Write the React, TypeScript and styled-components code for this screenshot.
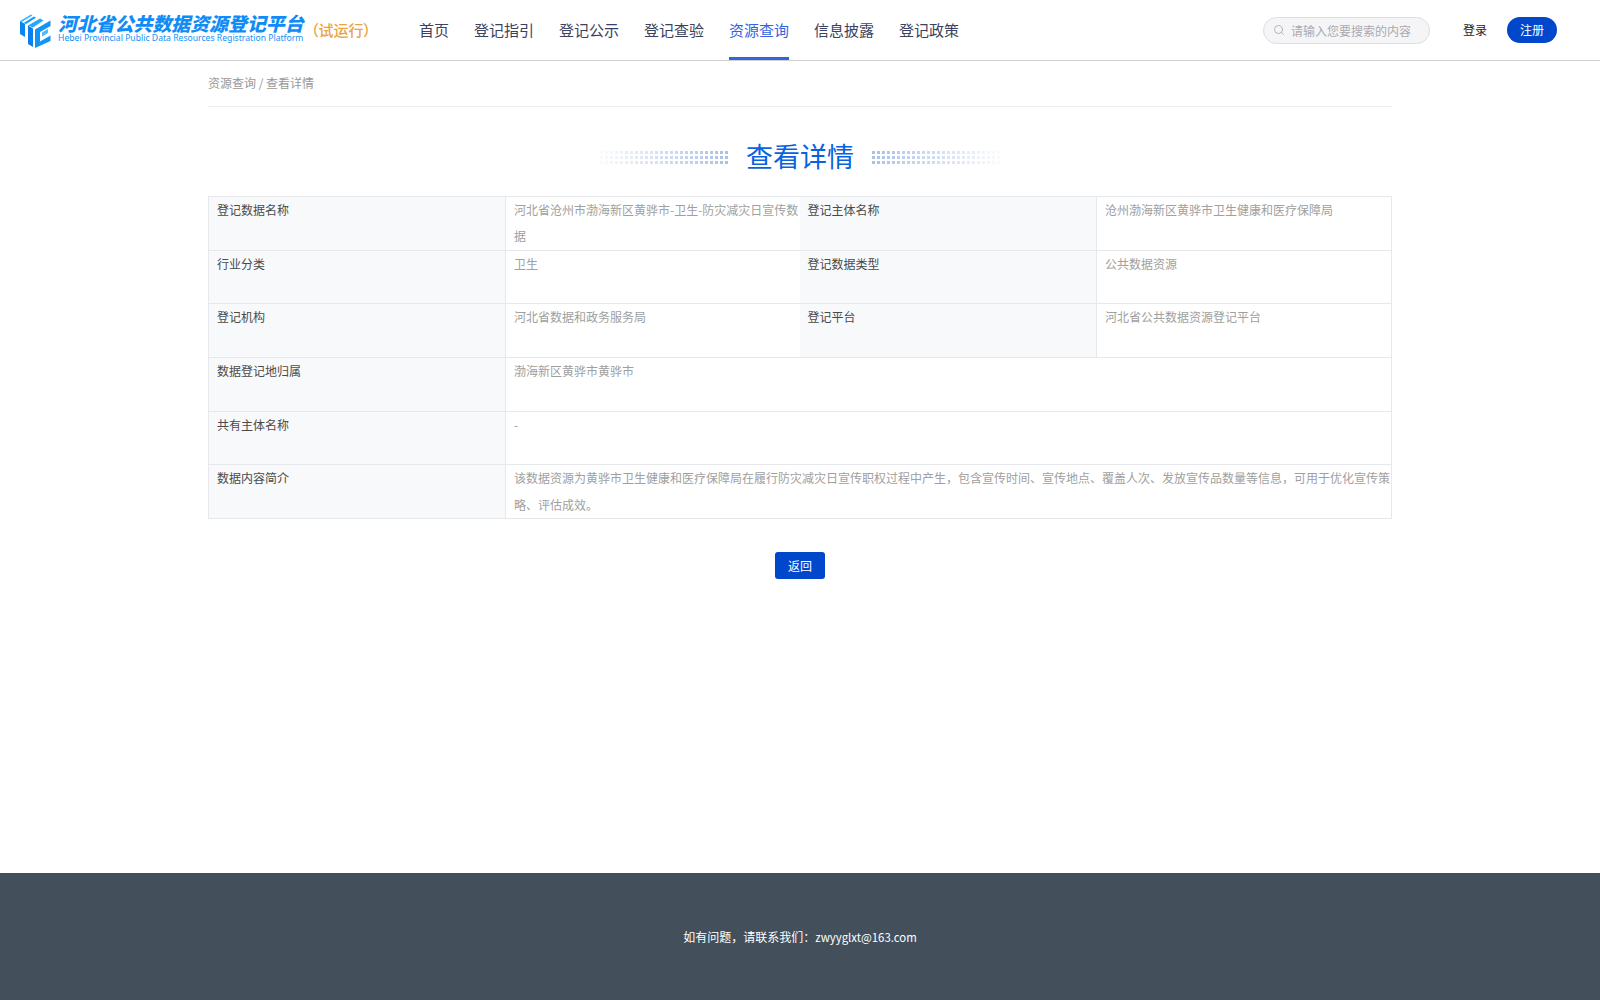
import React from "react";
import styled, { createGlobalStyle } from "styled-components";
import { Search } from "lucide-react";

const NAV_ITEMS = ["首页", "登记指引", "登记公示", "登记查验", "资源查询", "信息披露", "登记政策"];

const FONT = `"Noto Sans CJK SC", "Noto Sans", sans-serif`;

const GlobalStyle = createGlobalStyle`
  html, body {
    margin: 0;
    padding: 0;
    background: #fff;
    font-family: ${FONT};
  }
  * {
    box-sizing: border-box;
  }
`;

const Logo = () => (
  <LogoWrap>
    <svg width="31" height="36" viewBox="0 0 31 36" fill="none">
      <path d="M0 9 5 12v13l-5-3z" fill="#0a86f2" />
      <path d="M0 9 11 2.500l1.500 1L1.500 10z" fill="#3db2ff" />
      <path d="M3.500 11 14 4.500l2 1.200L6 12z" fill="#1a9bff" />
      <path d="M8 13.500 13 16.500V35l-5-3z" fill="#0a7fee" />
      <path d="M8 13.500 20 6.500l3.500 2L13 15.500z" fill="#2aa6ff" />
      <path d="M15 17.500 30.500 8.500v5.500L20 20v9.500L30.500 23.500V29L15 36z" fill="#1194f7" />
      <path d="M22 20.500 28 17v4l-6 3.500z" fill="#4dbaff" />
    </svg>
    <LogoText>
      <LogoTitle>河北省公共数据资源登记平台</LogoTitle>
      <LogoSub>Hebei Provincial Public Data Resources Registration Platform</LogoSub>
    </LogoText>
    <TrialTag>（试运行）</TrialTag>
  </LogoWrap>
);

const Header = () => (
  <Top>
    <Logo />
    <Nav>
      {NAV_ITEMS.map((item) => (
        <NavItem key={item} $active={item === "资源查询"}>
          {item}
        </NavItem>
      ))}
    </Nav>
    <SearchBox>
      <Search size={12} color="#9a9ca3" strokeWidth={1.4} />
      <span>请输入您要搜索的内容</span>
    </SearchBox>
    <LoginLink>登录</LoginLink>
    <RegisterBtn>注册</RegisterBtn>
  </Top>
);

const App = (): JSX.Element => {
  return (
    <Page>
      <GlobalStyle />
      <Header />
      <Main>
        <Crumb>资源查询 / 查看详情</Crumb>
        <TitleRow>
          <Dots />
          <h1>查看详情</h1>
          <Dots $flip />
        </TitleRow>
        <Info>
          <colgroup>
            <col />
            <col />
            <col />
            <col />
          </colgroup>
          <tbody>
            <tr>
              <Label>登记数据名称</Label>
              <Value>河北省沧州市渤海新区黄骅市-卫生-防灾减灾日宣传数据</Value>
              <Label>登记主体名称</Label>
              <Value>沧州渤海新区黄骅市卫生健康和医疗保障局</Value>
            </tr>
            <tr>
              <Label>行业分类</Label>
              <Value>卫生</Value>
              <Label>登记数据类型</Label>
              <Value>公共数据资源</Value>
            </tr>
            <tr>
              <Label>登记机构</Label>
              <Value>河北省数据和政务服务局</Value>
              <Label>登记平台</Label>
              <Value>河北省公共数据资源登记平台</Value>
            </tr>
            <tr>
              <Label>数据登记地归属</Label>
              <Value colSpan={3}>渤海新区黄骅市黄骅市</Value>
            </tr>
            <tr>
              <Label>共有主体名称</Label>
              <Value colSpan={3}>-</Value>
            </tr>
            <tr>
              <Label>数据内容简介</Label>
              <Value colSpan={3}>
                该数据资源为黄骅市卫生健康和医疗保障局在履行防灾减灾日宣传职权过程中产生，包含宣传时间、宣传地点、覆盖人次、发放宣传品数量等信息，可用于优化宣传策略、评估成效。
              </Value>
            </tr>
          </tbody>
        </Info>
        <BackRow>
          <BackBtn>返回</BackBtn>
        </BackRow>
      </Main>
      <Footer>
        如有问题，请联系我们：<Email>zwyyglxt@163.com</Email>
      </Footer>
    </Page>
  );
};

const Page = styled.div`
  display: flex;
  flex-direction: column;
  min-height: 1000px;
`;

const Top = styled.header`
  display: flex;
  align-items: center;
  height: 61px;
  padding: 0 43px 0 20px;
  border-bottom: 1px solid #cfcfd2;
`;

const LogoWrap = styled.div`
  display: flex;
  align-items: center;
  width: 399px;
  flex-shrink: 0;
  svg {
    flex-shrink: 0;
  }
`;

const LogoText = styled.div`
  margin-left: 7px;
  margin-top: -5px;
  width: 246px;
  flex-shrink: 0;
`;

const LogoTitle = styled.div`
  font-size: 18.900px;
  line-height: 20px;
  font-weight: 900;
  font-style: italic;
  white-space: nowrap;
  color: #0f8cf6;
`;

const LogoSub = styled.div`
  font-family: "Noto Sans", sans-serif;
  font-size: 8.650px;
  line-height: 10px;
  white-space: nowrap;
  color: #1492f7;
`;

const TrialTag = styled.div`
  margin-left: 7px;
  margin-top: -2px;
  font-size: 15px;
  font-weight: 500;
  white-space: nowrap;
  color: #e9a341;
  font-feature-settings: "palt";
`;

const Nav = styled.nav`
  display: flex;
  gap: 25px;
  height: 60px;
`;

const NavItem = styled.a<{ $active?: boolean }>`
  display: block;
  height: 60px;
  line-height: 60px;
  font-size: 15px;
  white-space: nowrap;
  color: ${(p) => (p.$active ? "#3563e0" : "#3a4260")};
  border-bottom: 3px solid ${(p) => (p.$active ? "#3563e0" : "transparent")};
`;

const SearchBox = styled.div`
  display: flex;
  align-items: center;
  gap: 6px;
  margin-left: auto;
  width: 167px;
  height: 27px;
  padding-left: 9px;
  border: 1px solid #dcdde3;
  border-radius: 14px;
  background: #f5f5f7;
  font-size: 12px;
  white-space: nowrap;
  color: #aaaaae;
`;

const LoginLink = styled.a`
  margin-left: 33px;
  margin-top: -1px;
  font-size: 12px;
  color: #222;
`;

const RegisterBtn = styled.button`
  margin-left: 20px;
  margin-top: -1px;
  width: 50px;
  height: 26px;
  padding: 0;
  border: 0;
  border-radius: 13px;
  background: #0047cc;
  font-family: inherit;
  font-size: 12px;
  color: #fff;
`;

const Main = styled.main`
  flex: 1;
  width: 1184px;
  margin: 0 auto;
`;

const Crumb = styled.div`
  height: 46px;
  line-height: 44px;
  font-size: 12px;
  color: #999;
  border-bottom: 1px solid #eeeff2;
`;

const TitleRow = styled.div`
  display: flex;
  align-items: center;
  justify-content: center;
  gap: 17px;
  height: 89px;
  padding-top: 8px;
  h1 {
    margin: 0;
    font-size: 27px;
    font-weight: 400;
    color: #0a62de;
  }
`;

const Dots = styled.div<{ $flip?: boolean }>`
  width: 130px;
  height: 15px;
  margin-top: 3px;
  background-image: radial-gradient(circle, #a9bfeb 1.500px, transparent 2px);
  background-size: 5px 5px;
  transform: ${(p) => (p.$flip ? "scaleX(-1)" : "none")};
  -webkit-mask-image: linear-gradient(to right, rgba(0, 0, 0, 0.05), #000 100%);
  mask-image: linear-gradient(to right, rgba(0, 0, 0, 0.05), #000 100%);
`;

const Info = styled.table`
  width: 100%;
  table-layout: fixed;
  border-collapse: collapse;
  border: 1px solid #e6e8ec;
  font-size: 12px;
  line-height: 26.400px;
  col:nth-child(1) {
    width: 297px;
  }
  col:nth-child(2) {
    width: 294px;
  }
  col:nth-child(3) {
    width: 297px;
  }
  tr {
    height: 53.600px;
    border-top: 1px solid #e6e8ec;
  }
`;

const Label = styled.td`
  padding: 0 0 0 8px;
  vertical-align: top;
  background: #f8f9fb;
  color: #4a4a4a;
`;

const Value = styled.td`
  padding: 0 0 0 8px;
  vertical-align: top;
  border-left: 1px solid #e6e8ec;
  color: #a0a0a0;
`;

const BackRow = styled.div`
  display: flex;
  justify-content: center;
  margin-top: 33px;
`;

const BackBtn = styled.button`
  width: 50px;
  height: 27px;
  padding: 0;
  border: 0;
  border-radius: 3px;
  background: #0047cc;
  font-family: inherit;
  font-size: 12px;
  color: #fff;
`;

const Footer = styled.footer`
  display: flex;
  align-items: center;
  justify-content: center;
  height: 127px;
  background: #434f5b;
  font-size: 12px;
  color: #fff;
`;

const Email = styled.span`
  font-size: 11.400px;
`;

export default App;
